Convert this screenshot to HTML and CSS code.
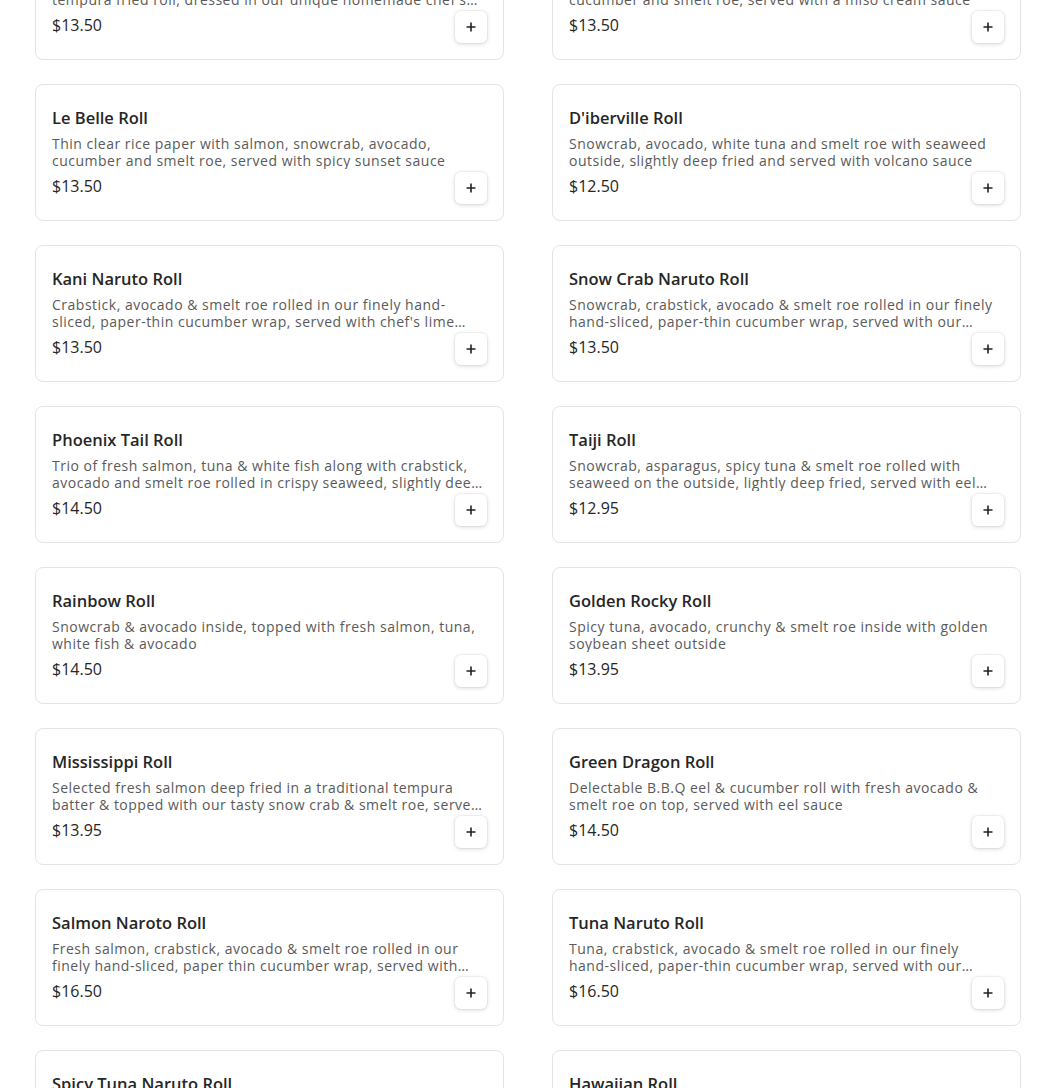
FILE: index.html
```html
<!DOCTYPE html>
<html lang="en">
<head>
<meta charset="utf-8">
<title>Menu</title>
<link rel="stylesheet" href="styles.css">
</head>
<body>
<main class="menu">
  <div class="grid">
    <article class="card">
      <h3 class="title">Volcano Roll</h3>
      <p class="desc">Snowcrab, avocado and cucumber in a light and crispy tempura fried roll, dressed in our unique homemade chef's special sauce</p>
      <div class="foot"><span class="price">$13.50</span><button class="add" aria-label="Add"><svg viewBox="0 0 10 10" width="10" height="10"><path d="M5 0.5v9M0.5 5h9"/></svg></button></div>
    </article>
    <article class="card">
      <h3 class="title">Miso Roll</h3>
      <p class="desc">Seared salmon with snowcrab, avocado and white tuna, cucumber and smelt roe, served with a miso cream sauce</p>
      <div class="foot"><span class="price">$13.50</span><button class="add" aria-label="Add"><svg viewBox="0 0 10 10" width="10" height="10"><path d="M5 0.5v9M0.5 5h9"/></svg></button></div>
    </article>

    <article class="card">
      <h3 class="title">Le Belle Roll</h3>
      <p class="desc">Thin clear rice paper with salmon, snowcrab, avocado, cucumber and smelt roe, served with spicy sunset sauce</p>
      <div class="foot"><span class="price">$13.50</span><button class="add" aria-label="Add"><svg viewBox="0 0 10 10" width="10" height="10"><path d="M5 0.5v9M0.5 5h9"/></svg></button></div>
    </article>
    <article class="card">
      <h3 class="title">D'iberville Roll</h3>
      <p class="desc">Snowcrab, avocado, white tuna and smelt roe with seaweed outside, slightly deep fried and served with volcano sauce</p>
      <div class="foot"><span class="price">$12.50</span><button class="add" aria-label="Add"><svg viewBox="0 0 10 10" width="10" height="10"><path d="M5 0.5v9M0.5 5h9"/></svg></button></div>
    </article>

    <article class="card">
      <h3 class="title">Kani Naruto Roll</h3>
      <p class="desc">Crabstick, avocado &amp; smelt roe rolled in our finely hand-sliced, paper-thin cucumber wrap, served with chef's lime ponzu sauce</p>
      <div class="foot"><span class="price">$13.50</span><button class="add" aria-label="Add"><svg viewBox="0 0 10 10" width="10" height="10"><path d="M5 0.5v9M0.5 5h9"/></svg></button></div>
    </article>
    <article class="card">
      <h3 class="title">Snow Crab Naruto Roll</h3>
      <p class="desc">Snowcrab, crabstick, avocado &amp; smelt roe rolled in our finely hand-sliced, paper-thin cucumber wrap, served with our chef's lime ponzu sauce</p>
      <div class="foot"><span class="price">$13.50</span><button class="add" aria-label="Add"><svg viewBox="0 0 10 10" width="10" height="10"><path d="M5 0.5v9M0.5 5h9"/></svg></button></div>
    </article>

    <article class="card">
      <h3 class="title">Phoenix Tail Roll</h3>
      <p class="desc">Trio of fresh salmon, tuna &amp; white fish along with crabstick, avocado and smelt roe rolled in crispy seaweed, slightly deep fried and served with volcano sauce</p>
      <div class="foot"><span class="price">$14.50</span><button class="add" aria-label="Add"><svg viewBox="0 0 10 10" width="10" height="10"><path d="M5 0.5v9M0.5 5h9"/></svg></button></div>
    </article>
    <article class="card">
      <h3 class="title">Taiji Roll</h3>
      <p class="desc">Snowcrab, asparagus, spicy tuna &amp; smelt roe rolled with seaweed on the outside, lightly deep fried, served with eel sauce and spicy mayo</p>
      <div class="foot"><span class="price">$12.95</span><button class="add" aria-label="Add"><svg viewBox="0 0 10 10" width="10" height="10"><path d="M5 0.5v9M0.5 5h9"/></svg></button></div>
    </article>

    <article class="card">
      <h3 class="title">Rainbow Roll</h3>
      <p class="desc">Snowcrab &amp; avocado inside, topped with fresh salmon, tuna, white fish &amp; avocado</p>
      <div class="foot"><span class="price">$14.50</span><button class="add" aria-label="Add"><svg viewBox="0 0 10 10" width="10" height="10"><path d="M5 0.5v9M0.5 5h9"/></svg></button></div>
    </article>
    <article class="card">
      <h3 class="title">Golden Rocky Roll</h3>
      <p class="desc">Spicy tuna, avocado, crunchy &amp; smelt roe inside with golden soybean sheet outside</p>
      <div class="foot"><span class="price">$13.95</span><button class="add" aria-label="Add"><svg viewBox="0 0 10 10" width="10" height="10"><path d="M5 0.5v9M0.5 5h9"/></svg></button></div>
    </article>

    <article class="card">
      <h3 class="title">Mississippi Roll</h3>
      <p class="desc">Selected fresh salmon deep fried in a traditional tempura batter &amp; topped with our tasty snow crab &amp; smelt roe, served with eel sauce</p>
      <div class="foot"><span class="price">$13.95</span><button class="add" aria-label="Add"><svg viewBox="0 0 10 10" width="10" height="10"><path d="M5 0.5v9M0.5 5h9"/></svg></button></div>
    </article>
    <article class="card">
      <h3 class="title">Green Dragon Roll</h3>
      <p class="desc">Delectable B.B.Q eel &amp; cucumber roll with fresh avocado &amp; smelt roe on top, served with eel sauce</p>
      <div class="foot"><span class="price">$14.50</span><button class="add" aria-label="Add"><svg viewBox="0 0 10 10" width="10" height="10"><path d="M5 0.5v9M0.5 5h9"/></svg></button></div>
    </article>

    <article class="card">
      <h3 class="title">Salmon Naroto Roll</h3>
      <p class="desc">Fresh salmon, crabstick, avocado &amp; smelt roe rolled in our finely hand-sliced, paper thin cucumber wrap, served with chef's lime ponzu sauce</p>
      <div class="foot"><span class="price">$16.50</span><button class="add" aria-label="Add"><svg viewBox="0 0 10 10" width="10" height="10"><path d="M5 0.5v9M0.5 5h9"/></svg></button></div>
    </article>
    <article class="card">
      <h3 class="title">Tuna Naruto Roll</h3>
      <p class="desc">Tuna, crabstick, avocado &amp; smelt roe rolled in our finely <span class="nw">hand-sliced,</span> paper-thin cucumber wrap, served with our chef's lime ponzu sauce</p>
      <div class="foot"><span class="price">$16.50</span><button class="add" aria-label="Add"><svg viewBox="0 0 10 10" width="10" height="10"><path d="M5 0.5v9M0.5 5h9"/></svg></button></div>
    </article>

    <article class="card">
      <h3 class="title">Spicy Tuna Naruto Roll</h3>
      <p class="desc">Spicy tuna, crabstick, avocado &amp; smelt roe rolled in our finely hand-sliced, paper-thin cucumber wrap</p>
      <div class="foot"><span class="price">$16.50</span><button class="add" aria-label="Add"><svg viewBox="0 0 10 10" width="10" height="10"><path d="M5 0.5v9M0.5 5h9"/></svg></button></div>
    </article>
    <article class="card">
      <h3 class="title">Hawaiian Roll</h3>
      <p class="desc">Snowcrab, avocado &amp; cucumber inside, topped with fresh tuna and mango</p>
      <div class="foot"><span class="price">$14.50</span><button class="add" aria-label="Add"><svg viewBox="0 0 10 10" width="10" height="10"><path d="M5 0.5v9M0.5 5h9"/></svg></button></div>
    </article>
  </div>
</main>
</body>
</html>
```

FILE: styles.css
```css
html, body {
  margin: 0;
  padding: 0;
  background: #ffffff;
}

body {
  font-family: "Open Sans", "Liberation Sans", sans-serif;
  color: #1f1f1f;
}

.menu {
  padding-left: 35px;
  margin-top: -77px;
}

.grid {
  display: grid;
  grid-template-columns: repeat(2, 469px);
  column-gap: 48px;
  row-gap: 24px;
}

.card {
  box-sizing: border-box;
  height: 137px;
  border: 1px solid #e4e4e4;
  border-radius: 8px;
  padding: 16px;
  display: flex;
  flex-direction: column;
  background: #fff;
}

.title {
  margin: 6px 0 0;
  font-size: 16.5px;
  line-height: 22px;
  font-weight: 600;
  color: #262626;
}

.desc {
  margin: 6px 0 0;
  font-size: 14px;
  line-height: 17px;
  height: 34px;
  color: #5a5a5a;
  letter-spacing: 0.5px;
  display: -webkit-box;
  -webkit-line-clamp: 2;
  -webkit-box-orient: vertical;
  overflow: hidden;
}

.nw {
  white-space: nowrap;
}

.foot {
  margin-top: 3px;
  display: flex;
  justify-content: space-between;
  align-items: flex-start;
}

.price {
  margin-top: 4px;
  font-size: 16px;
  line-height: 20px;
  color: #262626;
}

.add {
  width: 32px;
  height: 32px;
  padding: 0;
  border: none;
  border-radius: 6px;
  background: #fff;
  box-shadow: 0 1px 4px rgba(0, 0, 0, 0.16), 0 0 0 1px rgba(0, 0, 0, 0.03);
  display: flex;
  align-items: center;
  justify-content: center;
  cursor: pointer;
}

.add svg {
  display: block;
}

.add path {
  stroke: #222;
  stroke-width: 1.6;
  fill: none;
}
```
